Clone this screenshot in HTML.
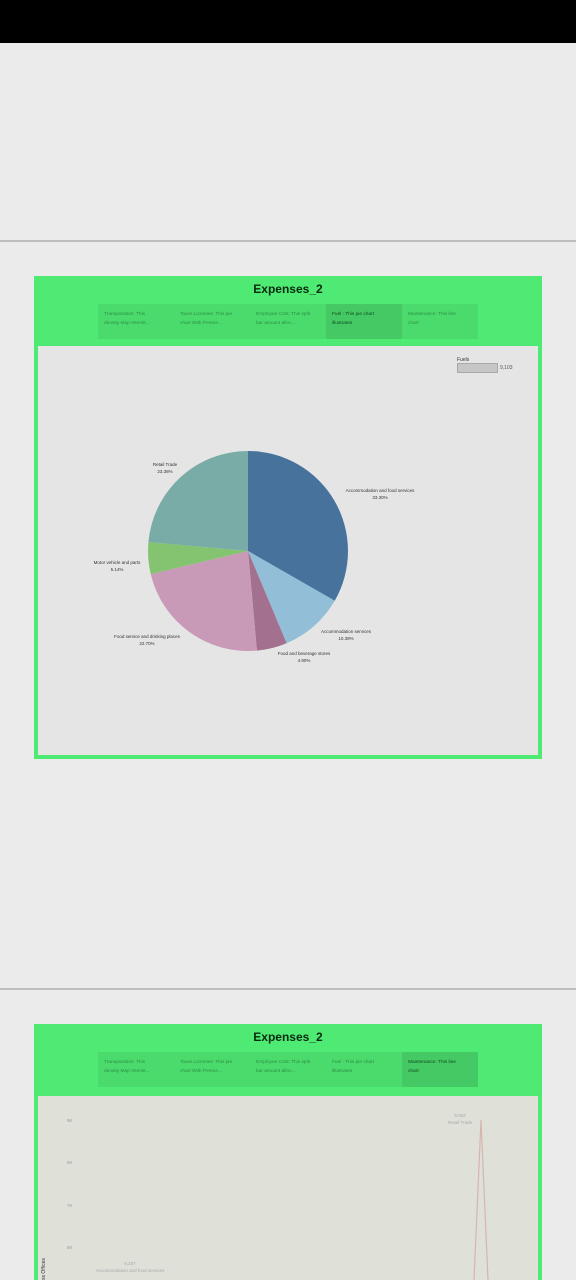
<!DOCTYPE html>
<html><head><meta charset="utf-8"><style>
*{margin:0;padding:0;box-sizing:border-box}
html,body{width:576px;height:1280px;overflow:hidden}
body{background:#ebebeb;font-family:"Liberation Sans",sans-serif;position:relative}
.abs{position:absolute}
.dash{position:absolute;left:34px;width:508px;background:#4fea74;overflow:hidden}
.title{position:absolute;left:0;right:0;top:6px;text-align:center;font-weight:bold;font-size:12px;color:#0a2a10}
.tabs{position:absolute;left:64px;top:28px;width:380px;height:35px;background:#4bdb6d;display:flex}
.tab{width:76px;height:35px;padding:6px 14px 5px 6px;font-size:4.8px;line-height:9px;color:#2c8f44}
.tab.on{background:#44c964;color:#114a1e}
.t{font-size:4.5px;color:#333;text-align:center;line-height:7px;position:absolute;white-space:nowrap}
</style></head><body>
<div class="abs" style="left:0;top:0;width:576px;height:43px;background:#000"></div>
<div class="abs" style="left:0;top:240px;width:576px;height:2px;background:#bdbdbd"></div>
<div class="dash" style="top:276px;height:483px">
 <div class="title">Expenses_2</div>
 <div class="tabs">
  <div class="tab">Transporation: This density Map Intersit...</div>
  <div class="tab">Taxes Licenses: This pie chart With Person...</div>
  <div class="tab">Employee Cost: This split bar amount alloc...</div>
  <div class="tab on">Fuel : This pie chart illustrates</div>
  <div class="tab">Maintenance: This line chart</div>
 </div>
 <div class="abs" style="left:4px;top:70px;width:500px;height:409px;background:#e5e5e5"></div>
</div>
<div class="abs" style="left:457px;top:357px;font-size:5px;color:#333">Fuels</div>
<div class="abs" style="left:457px;top:363px;width:41px;height:10px;background:#c6c6c6;border:1px solid #aaa"></div>
<div class="abs" style="left:500px;top:365px;font-size:5px;color:#555">9,103</div>
<svg class="abs" style="left:0;top:0" width="576" height="800">
<path d="M248,551 L248,451 A100,100 0 0 1 334.7,600.8 Z" fill="#46729c"/>
<path d="M248,551 L334.7,600.8 A100,100 0 0 1 286.6,643.2 Z" fill="#92bed8"/>
<path d="M248,551 L286.6,643.2 A100,100 0 0 1 256.9,650.6 Z" fill="#a3708f"/>
<path d="M248,551 L256.9,650.6 A100,100 0 0 1 150.7,574.1 Z" fill="#c99ab7"/>
<path d="M248,551 L150.7,574.1 A100,100 0 0 1 148.4,542 Z" fill="#84c470"/>
<path d="M248,551 L148.4,542 A100,100 0 0 1 248,451 Z" fill="#79aba7"/>
</svg>
<div class="t" style="left:140px;top:461px;width:50px">Retail Trade<br>23.38%</div>
<div class="t" style="left:330px;top:487px;width:100px">Accommodation and food services<br>33.30%</div>
<div class="t" style="left:80px;top:559px;width:74px">Motor vehicle and parts<br>5.14%</div>
<div class="t" style="left:100px;top:633px;width:94px">Food service and drinking places<br>22.70%</div>
<div class="t" style="left:310px;top:628px;width:72px">Accommodation services<br>10.39%</div>
<div class="t" style="left:268px;top:650px;width:72px">Food and beverage stores<br>4.90%</div>
<div class="abs" style="left:0;top:988px;width:576px;height:2px;background:#bdbdbd"></div>
<div class="dash" style="top:1024px;height:256px">
 <div class="title">Expenses_2</div>
 <div class="tabs">
  <div class="tab">Transporation: This density Map Intersit...</div>
  <div class="tab">Taxes Licenses: This pie chart With Person...</div>
  <div class="tab">Employee Cost: This split bar amount alloc...</div>
  <div class="tab">Fuel : This pie chart illustrates</div>
  <div class="tab on">Maintenance: This line chart</div>
 </div>
 <div class="abs" style="left:4px;top:72px;width:500px;height:190px;background:#dfe0d8"></div>
</div>
<div class="abs" style="left:67px;top:1118px;font-size:4.5px;color:#999">9K</div>
<div class="abs" style="left:67px;top:1160px;font-size:4.5px;color:#999">8K</div>
<div class="abs" style="left:67px;top:1203px;font-size:4.5px;color:#999">7K</div>
<div class="abs" style="left:67px;top:1245px;font-size:4.5px;color:#999">6K</div>
<div class="abs" style="top:1280px;left:41px;font-size:5px;color:#333;transform:rotate(-90deg);transform-origin:left top;white-space:nowrap">ss Offices</div>
<div class="t" style="left:440px;top:1112px;width:40px;color:#aaa">9,002<br>Retail Trade</div>
<div class="t" style="left:70px;top:1260px;width:120px;color:#aaa">5,257<br>Accommodation and food services</div>
<svg class="abs" style="left:0;top:1100px" width="576" height="180">
<polyline points="474,180 481,20 488,180" fill="none" stroke="#d6b5ae" stroke-width="1.2"/>
</svg>
</body></html>
